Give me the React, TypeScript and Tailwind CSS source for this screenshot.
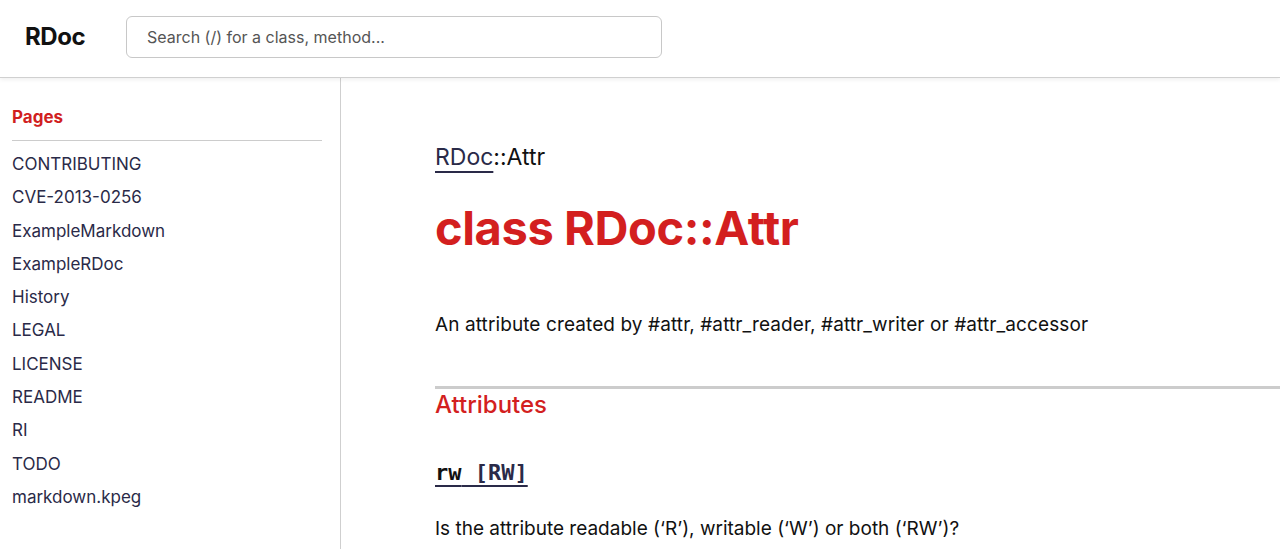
import React from "react";

const pages = [
  "CONTRIBUTING",
  "CVE-2013-0256",
  "ExampleMarkdown",
  "ExampleRDoc",
  "History",
  "LEGAL",
  "LICENSE",
  "README",
  "RI",
  "TODO",
  "markdown.kpeg",
];

const App = () => {
  return (
    <div className="h-[549px] overflow-hidden bg-white font-['Inter',sans-serif] text-[#222]">
      <header className="relative z-10 flex h-[78px] items-start border-b border-[#d0d0d0] pt-[16px] shadow-[0_2px_4px_rgba(0,0,0,0.06)]">
        <a className="ml-[25px] flex h-[42px] w-[101px] items-center text-[24px] font-bold tracking-[-0.4px] text-[#111]">
          RDoc
        </a>
        <div className="flex h-[42px] w-[536px] items-center rounded-[6px] border border-[#c8c8c8] px-[20px] text-[16px] text-[#555]">
          Search (/) for a class, method...
        </div>
      </header>
      <div className="flex h-[471px]">
        <nav className="w-[341px] shrink-0 border-r border-[#cfcfcf] pl-[12px] pr-[18px] pt-[28px]">
          <h3 className="text-[17px] font-bold leading-[22px] text-[#d11f1f]">Pages</h3>
          <div className="mt-[12px] h-px bg-[#cccccc]" />
          <ul className="mt-[10px] flex flex-col">
            {pages.map((p) => (
              <li key={p} className="h-[33.3px] text-[17px] leading-[26px] text-[#2a2a48]">
                {p}
              </li>
            ))}
          </ul>
        </nav>
        <main className="flex-1 pl-[94px] pt-[66px]">
          <p className="text-[23px] leading-[26px] text-[#111]">
            <span className="text-[#2a2a48] underline decoration-[#2a2a48] decoration-2 underline-offset-[6px]">RDoc</span>
            ::Attr
          </p>
          <h1 className="mt-[30px] text-[47px] font-bold leading-[56px] tracking-[-0.4px] text-[#d31f1f]">
            class RDoc::Attr
          </h1>
          <p className="mt-[56px] text-[19px] leading-[26px] tracking-[0.1px] text-[#111]">
            An attribute created by #attr, #attr_reader, #attr_writer or #attr_accessor
          </p>
          <div className="mt-[48px] h-[3px] bg-[#cccccc]" />
          <h2 className="mt-[1px] text-[24px] font-medium leading-[30px] text-[#d31f1f]">Attributes</h2>
          <div className="mt-[39px] font-['DejaVu_Sans_Mono',monospace] text-[22px] font-bold leading-[28px]">
            <span className="underline decoration-[#2a2a48] decoration-2 underline-offset-[5px]">
              <span className="text-[#111]">rw</span>
              <span className="text-[#2a2a48]"> [RW]</span>
            </span>
          </div>
          <p className="mt-[29px] text-[19px] leading-[26px] text-[#111]">
            Is the attribute readable (‘R’), writable (‘W’) or both (‘RW’)?
          </p>
        </main>
      </div>
    </div>
  );
};

export default App;
